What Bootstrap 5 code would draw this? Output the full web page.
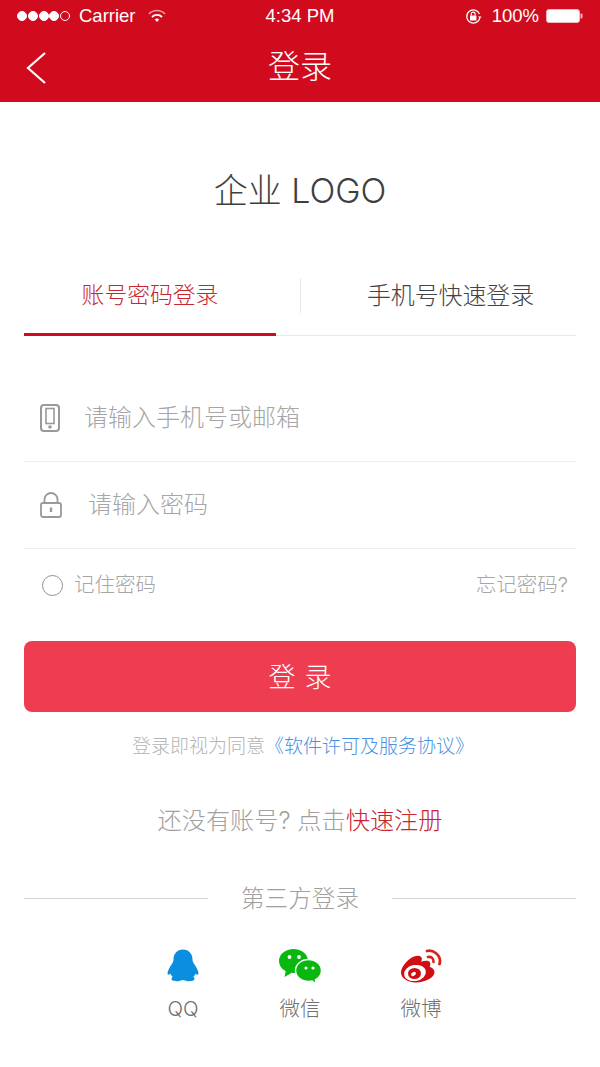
<!DOCTYPE html>
<html lang="zh-CN">
<head>
    <meta charset="UTF-8">
    <meta name="viewport" content="width=device-width, initial-scale=1.0">
    <title>登录</title>
    <link href="https://cdn.jsdelivr.net/npm/bootstrap@5.3.2/dist/css/bootstrap.min.css" rel="stylesheet">
    <style>
        body {
            width: 600px;
            height: 1067px;
            overflow: hidden;
            background: #fff;
            font-family: Inter, "Noto Sans CJK SC", sans-serif;
            font-weight: 300;
            color: #444;
        }

        .top-bar {
            height: 102px;
            background: #d00b1e;
            color: #fff;
        }

        .status-row {
            height: 32px;
            padding: 0 17px;
            font-family: "Liberation Sans", sans-serif;
            font-weight: 400;
            font-size: 18.5px;
        }

        .status-side {
            width: 200px;
        }

        .sig-dot {
            flex-shrink: 0;
            width: 10px;
            height: 10px;
            border: 1px solid #fff;
            border-radius: 50%;
            background: #fff;
            margin-right: .8px;
        }

        .sig-dot.off {
            background: none;
        }

        .carrier-name {
            margin-left: 8px;
        }

        .wifi-icon {
            margin-left: 12px;
        }

        .pct-text {
            margin: 0 7px 0 10px;
        }

        .title-row {
            height: 70px;
            position: relative;
            font-size: 32px;
        }

        .back-icon {
            position: absolute;
            left: 24px;
            top: 19px;
        }

        .logo-text {
            height: 176px;
            font-size: 34px;
            color: #3f3f3f;
        }

        .tab-row {
            height: 58px;
            margin: 0 24px;
            border-bottom: 1px solid #e9e9e9;
            position: relative;
        }

        .tab-item {
            width: 276px;
            height: 35px;
        }

        .tab-item.on {
            padding-right: 24px;
            font-size: 22.8px;
            color: #c9252f;
        }

        .tab-item.off {
            padding-left: 24px;
            font-size: 23.9px;
            border-left: 1px solid #e9e9e9;
        }

        .tab-mark {
            position: absolute;
            left: 0;
            bottom: -1px;
            width: 252px;
            height: 3px;
            background: #d00b1e;
        }

        .field-row {
            height: 87px;
            margin: 0 24px;
            border-bottom: 1px solid #eee;
            font-size: 24px;
            color: #a6a6a6;
        }

        .field-one {
            margin-top: 38px;
            height: 88px;
            padding-left: 16px;
            gap: 24px;
        }

        .field-two {
            padding-left: 16px;
            gap: 26px;
        }

        .remember-row {
            height: 73px;
            margin: 0 24px;
            padding: 0 8px 0 18px;
            font-size: 20.5px;
            color: #a6a6a6;
        }

        .tick-ring {
            flex-shrink: 0;
            width: 21px;
            height: 21px;
            border: 1.5px solid #8f8f8f;
            border-radius: 50%;
            margin-right: 11px;
        }

        .login-btn {
            display: block;
            width: 552px;
            height: 71px;
            margin: 19px 24px 0;
            padding: 4px 6px 0 15px;
            border: 0;
            border-radius: 8px;
            background: #ee3d50;
            color: #fff;
            font-size: 27px;
            font-weight: 300;
            letter-spacing: 9px;
        }

        .agree-row {
            margin-top: 21px;
            padding-left: 6px;
            height: 28px;
            font-size: 19px;
            color: #b4b4b4;
        }

        .agree-row span {
            color: #4a90e2;
        }

        .reg-row {
            margin-top: 43px;
            height: 34px;
            font-size: 24.2px;
            color: #a0a0a0;
        }

        .reg-row span {
            color: #c9252f;
        }

        .third-row {
            margin: 43px 24px 0;
            height: 34px;
            font-size: 23.6px;
            color: #a0a0a0;
            gap: 33px;
        }

        .third-label {
            padding-top: 2px;
        }

        .third-line {
            flex: 1;
            height: 1px;
            background: #d4d4d4;
        }

        .social-wrap {
            position: relative;
            height: 90px;
            margin-top: 34px;
            font-size: 20.5px;
            color: #6f6f6f;
        }

        .social-item {
            position: absolute;
            top: 0;
            width: 90px;
            text-align: center;
            line-height: 30px;
        }

        .social-item svg {
            display: block;
            margin: 0 auto 11px;
        }

        .social-qq {
            left: 138px;
        }

        .social-wx {
            left: 255px;
        }

        .social-wb {
            left: 376px;
        }
    </style>
</head>
<body>
    <div class="top-bar">
        <div class="status-row d-flex align-items-center justify-content-between">
            <div class="status-side d-flex align-items-center">
                <i class="sig-dot"></i><i class="sig-dot"></i><i class="sig-dot"></i><i class="sig-dot"></i><i class="sig-dot off"></i>
                <span class="carrier-name">Carrier</span>
                <svg class="wifi-icon" width="18" height="14" viewBox="0 0 18 14" fill="none" stroke="#fff">
                    <path d="M1 5a11 11 0 0 1 16 0" stroke-width="1.6" opacity=".6"/>
                    <path d="M4 8a7 7 0 0 1 10 0" stroke-width="1.8"/>
                    <path d="M6.800 10.600a3.200 3.200 0 0 1 4.400 0L9 13z" fill="#fff" stroke="none"/>
                </svg>
            </div>
            <div>4:34 PM</div>
            <div class="status-side d-flex align-items-center justify-content-end">
                <svg width="17" height="17" viewBox="0 0 17 17" fill="none" stroke="#fff" stroke-width="1.2">
                    <path d="M14.500 6a6.600 6.600 0 1 0 .4 3.500"/>
                    <path d="M13 8.500h3.600l-1.800 2z" fill="#fff" stroke="none"/>
                    <rect x="5" y="7.500" width="6.400" height="5" fill="#fff" stroke="none"/>
                    <path d="M6.300 7.500V6a1.900 1.900 0 0 1 3.800 0v1.500"/>
                </svg>
                <span class="pct-text">100%</span>
                <svg width="37" height="14" viewBox="0 0 37 14">
                    <rect x=".5" y=".5" width="33" height="13" rx="2.500" fill="#fff" stroke="#f3b8bd"/>
                    <path d="M34.500 4.500h1a1 1 0 0 1 1 1v3a1 1 0 0 1-1 1h-1z" fill="#f3b8bd"/>
                </svg>
            </div>
        </div>
        <div class="title-row d-flex align-items-center justify-content-center">
            <svg class="back-icon" width="24" height="34" viewBox="0 0 24 34" fill="none" stroke="#fff" stroke-width="2.2">
                <path d="M21 2 4 17l17 15"/>
            </svg>
            登录
        </div>
    </div>

    <div class="logo-text d-flex align-items-center justify-content-center">企业 LOGO</div>

    <div class="tab-row d-flex align-items-start">
        <div class="tab-item on d-flex align-items-center justify-content-center">账号密码登录</div>
        <div class="tab-item off d-flex align-items-center justify-content-center">手机号快速登录</div>
        <div class="tab-mark"></div>
    </div>

    <div class="field-row field-one d-flex align-items-center">
        <svg width="20" height="28" viewBox="0 0 20 28" fill="none" stroke="#999" stroke-width="2">
            <rect x="1" y="1" width="18" height="26" rx="3"/>
            <rect x="6" y="4.500" width="8" height="15" stroke-width="1.6"/>
            <circle cx="10" cy="23" r=".8" fill="#999"/>
        </svg>
        <span>请输入手机号或邮箱</span>
    </div>
    <div class="field-row field-two d-flex align-items-center">
        <svg width="22" height="26" viewBox="0 0 22 26" fill="none" stroke="#999" stroke-width="1.8">
            <rect x="1" y="11" width="20" height="14" rx="2"/>
            <path d="M4.500 11V7.500a6.500 6.500 0 0 1 13 0V11"/>
            <path d="M11 15.500v4.500" stroke-width="2.400"/>
        </svg>
        <span>请输入密码</span>
    </div>
    <div class="remember-row d-flex align-items-center justify-content-between">
        <div class="d-flex align-items-center"><i class="tick-ring"></i>记住密码</div>
        <div>忘记密码?</div>
    </div>

    <button class="login-btn" type="button">登录</button>

    <div class="agree-row d-flex align-items-center justify-content-center">登录即视为同意<span>《软件许可及服务协议》</span></div>
    <div class="reg-row d-flex align-items-center justify-content-center"><div>还没有账号? 点击<span>快速注册</span></div></div>

    <div class="third-row d-flex align-items-center">
        <div class="third-line"></div>
        <div class="third-label">第三方登录</div>
        <div class="third-line"></div>
    </div>

    <div class="social-wrap">
        <div class="social-item social-qq">
            <svg width="32" height="34" viewBox="0 0 32 34" fill="#0a8fe0">
                <path d="M16 .5C10 .5 6.500 5 6.500 10.500c0 2-.8 3-2 5C2.500 18.500.5 22 .5 24.500c0 1.500 1.200 1.500 3 .2.6 1.300 1.200 2.200 2.200 3C4.500 28.500 4 30 5 31c1.500 1.500 7 1.500 9 .5.8-.4 1.200-.6 2-.6s1.200.2 2 .6c2 1 7.500 1 9-.5 1-1 .5-2.500-.7-3.300 1-.8 1.600-1.700 2.200-3 1.800 1.300 3 1.300 3-.2 0-2.500-2-6-4-9-1.200-2-2-3-2-5C25.500 5 22 .5 16 .5z"/>
            </svg>
            QQ
        </div>
        <div class="social-item social-wx">
            <svg width="42" height="34" viewBox="0 0 42 34">
                <ellipse cx="14.500" cy="12" rx="14.500" ry="12" fill="#09b80f"/>
                <path d="M7 21 5.500 28l7-4z" fill="#09b80f"/>
                <ellipse cx="29.500" cy="21.500" rx="13" ry="11" fill="#09b80f" stroke="#fff" stroke-width="1.5"/>
                <path d="M32 30l4 3.500-.5-5z" fill="#09b80f"/>
                <circle cx="10.500" cy="8" r="1.900" fill="#fff"/>
                <circle cx="20" cy="8" r="1.900" fill="#fff"/>
                <circle cx="27" cy="19" r="1.600" fill="#fff"/>
                <circle cx="34" cy="19" r="1.600" fill="#fff"/>
            </svg>
            微信
        </div>
        <div class="social-item social-wb">
            <svg width="42" height="34" viewBox="0 0 42 34">
                <path d="M16 33.500C7.500 33.500 1 29 1 23.500c0-5 6-13 13-16 3.500-1.500 6.500-1 7.500 1 .7 1.500.3 3-.3 4.300 3-1 7-1.700 8.500.3 1 1.300.7 3 0 4.700 3 1 4.800 2.800 4.800 5.700 0 4.500-9 10-18.500 10z" fill="#cf0f14"/>
                <ellipse cx="15" cy="24" rx="11" ry="8" fill="#fff" transform="rotate(-10 15 24)"/>
                <ellipse cx="14.500" cy="24.500" rx="6.500" ry="5.500" fill="#cf0f14"/>
                <ellipse cx="13.500" cy="25" rx="2.600" ry="1.800" fill="#fff" transform="rotate(-30 13.500 25)"/>
                <path d="M27 2c6-1.500 13 3.500 13 10 0 1-.2 2-.5 3" fill="none" stroke="#d8211b" stroke-width="2.800" stroke-linecap="round"/>
                <path d="M28 8c3-.8 6 1.500 5.500 5" fill="none" stroke="#d8211b" stroke-width="2.600" stroke-linecap="round"/>
            </svg>
            微博
        </div>
    </div>

    <script src="https://cdn.jsdelivr.net/npm/bootstrap@5.3.2/dist/js/bootstrap.bundle.min.js"></script>
</body>
</html>
